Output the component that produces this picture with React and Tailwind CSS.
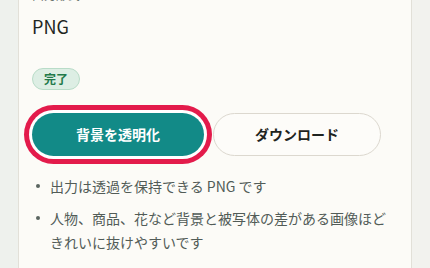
export default function App() {
  return (
    <div className="w-[430px] h-[268px] overflow-hidden flex bg-[#eef1ed] font-['Noto_Sans_CJK_JP','Noto_Sans',sans-serif]">
      <div className="w-[18px] shrink-0" />
      <div className="w-[394px] shrink-0 border-x border-[#e2e0d8] bg-[#fcfbf7] pl-[13px] pr-[15px]">
        <div className="-mt-[13px] flex flex-col items-start">
          <div className="text-[12px] leading-[16px] text-[#6b736e]">出力形式</div>
          <div className="mt-[9px] text-[18px] leading-[28px] text-[#1f2622]">PNG</div>
          <span className="mt-[28px] inline-flex h-[22px] items-center rounded-full border border-[#b9dcc8] bg-[#ddeee4] px-[11px] text-[12px] font-bold text-[#237a4b]">
            完了
          </span>
          <div className="mt-[23px] flex">
            <button className="h-[43px] w-[172px] rounded-full bg-[#128a87] text-[14px] font-bold text-white ring-[5px] ring-[#e31b4b] ring-offset-[3px] ring-offset-white">
              背景を透明化
            </button>
            <button className="ml-[9px] h-[43px] w-[168px] rounded-full border border-[#dcd8cf] bg-[#fdfcf9] text-[14px] font-bold text-[#1e2320]">
              ダウンロード
            </button>
          </div>
          <ul className="mt-[18px] flex flex-col gap-[8px] text-[14px] leading-[24px] text-[#525c57]">
            <li className="flex">
              <span className="w-[18px] shrink-0 flex justify-start pl-[4px] pt-[10px]">
                <span className="block h-[4px] w-[4px] rounded-full bg-[#5a6560]" />
              </span>
              <span>出力は透過を保持できる PNG です</span>
            </li>
            <li className="flex">
              <span className="w-[18px] shrink-0 flex justify-start pl-[4px] pt-[10px]">
                <span className="block h-[4px] w-[4px] rounded-full bg-[#5a6560]" />
              </span>
              <span>人物、商品、花など背景と被写体の差がある画像ほどきれいに抜けやすいです</span>
            </li>
          </ul>
        </div>
      </div>
      <div className="flex-1 bg-[#f2f2ee]" />
    </div>
  );
}
